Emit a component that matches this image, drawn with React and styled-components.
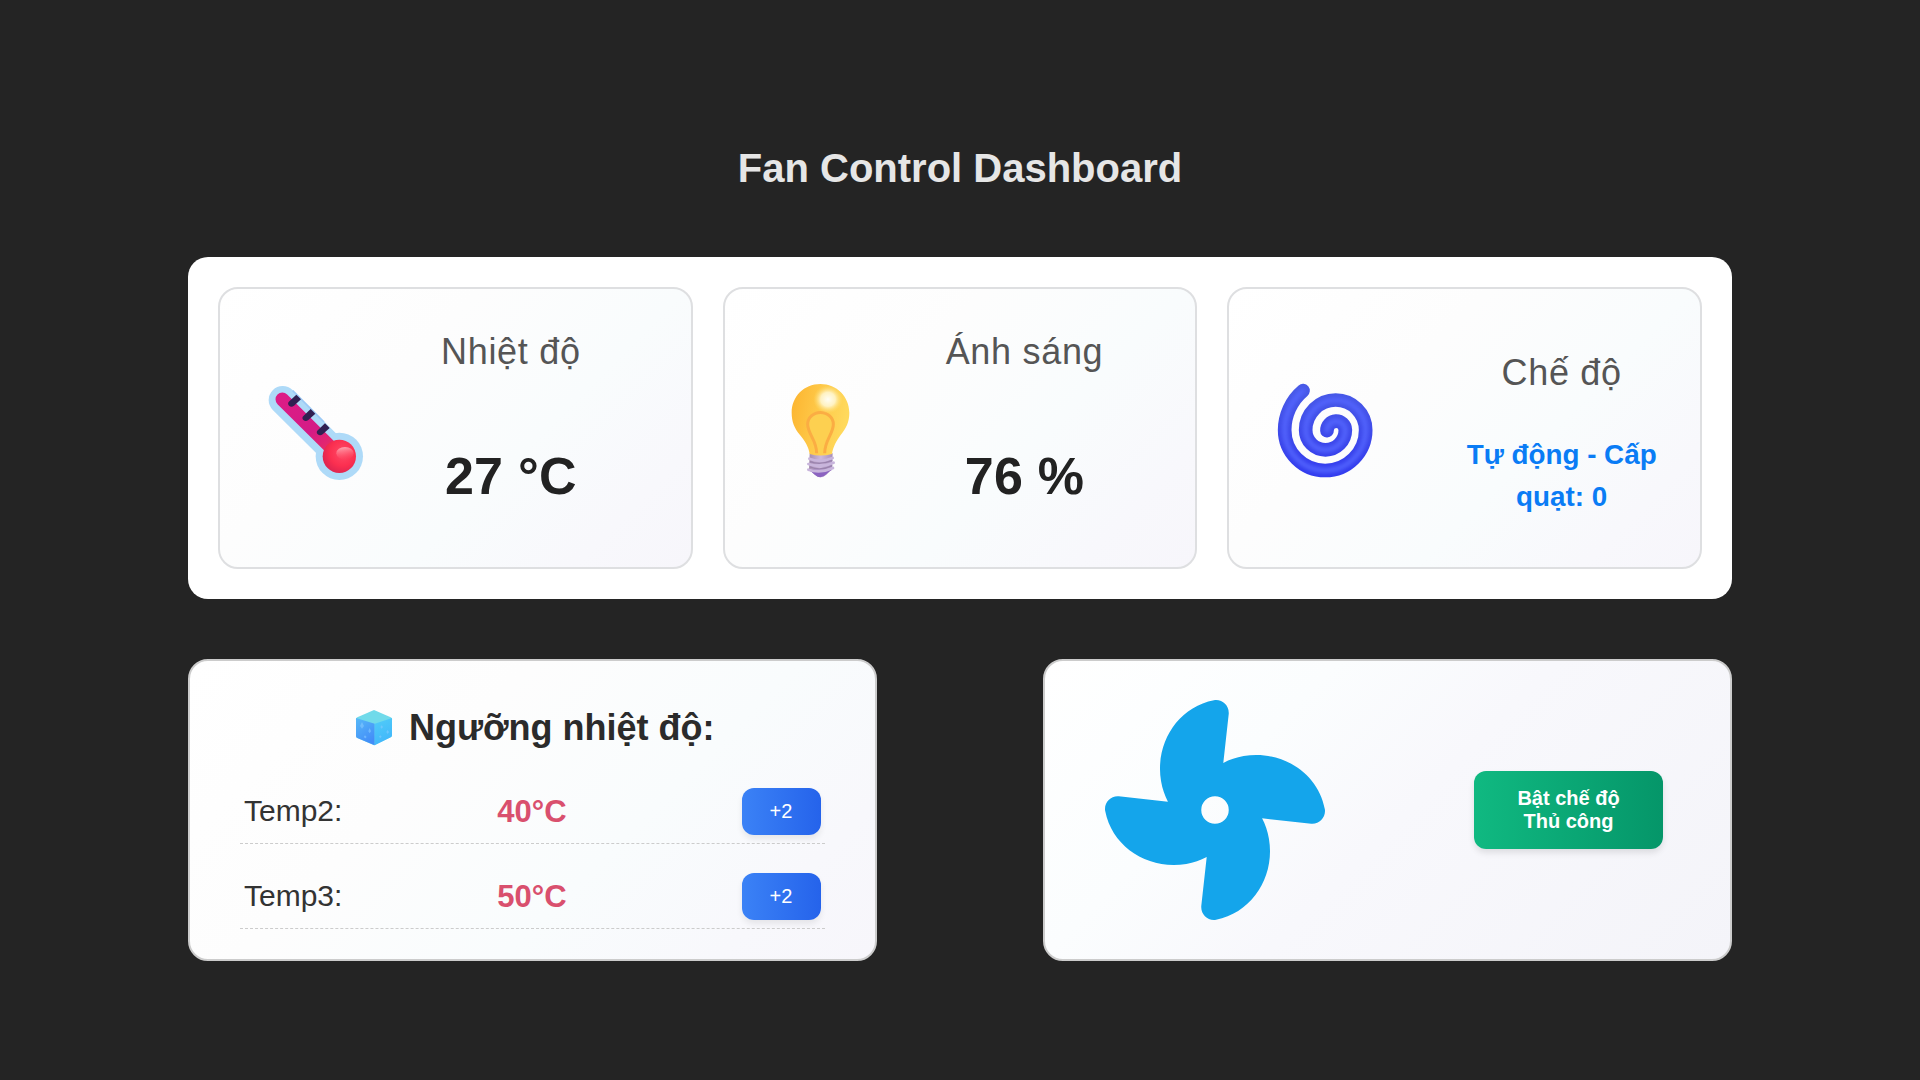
import React from 'react';
import styled, { createGlobalStyle } from 'styled-components';

const GlobalStyle = createGlobalStyle`
  * { box-sizing: border-box; }
  body {
    margin: 0;
    background: #242424;
    font-family: Arial, "Liberation Sans", sans-serif;
  }
`;

const Page = styled.main`
  width: 1544px;
  min-height: 1080px;
  margin: 0 auto;
  padding-top: 138px;
`;

const Title = styled.h1`
  margin: 0 0 59px;
  font-size: 40px;
  line-height: 60px;
  font-weight: 700;
  text-align: center;
  color: #e6e6e6;
`;

const StatsPanel = styled.section`
  display: grid;
  grid-template-columns: repeat(3, 1fr);
  gap: 30px;
  height: 342px;
  padding: 30px;
  border-radius: 20px;
  background: #fff;
`;

const StatCard = styled.article`
  display: flex;
  align-items: center;
  padding-left: 30px;
  border: 2px solid #dedfe1;
  border-radius: 20px;
  background: linear-gradient(135deg, #ffffff 0%, #fdfdfd 35%, #f9fcfd 62%, #f8f8fc 84%, #f7f6fb 100%);
`;

const StatIcon = styled.svg`
  flex: none;
  width: 130px;
  height: 120px;
`;

const StatInfo = styled.div`
  flex: 1;
  align-self: stretch;
  display: flex;
  flex-direction: column;
  align-items: center;
  gap: ${(p) => p.$gap}px;
  padding: ${(p) => p.$pad};
`;

const StatLabel = styled.div`
  font-size: 36px;
  line-height: 54px;
  letter-spacing: 0.7px;
  color: #555;
`;

const StatValue = styled.div`
  font-size: 52px;
  line-height: 78px;
  font-weight: 700;
  letter-spacing: 0.2px;
  color: #222;
`;

const ModeText = styled.div`
  max-width: 220px;
  font-size: 27.8px;
  line-height: 42px;
  font-weight: 700;
  text-align: center;
  color: #0a7cf5;
`;

const BottomRow = styled.div`
  display: flex;
  justify-content: space-between;
  margin-top: 60px;
`;

const BottomCard = styled.section`
  width: 689px;
  height: 302px;
  border: 2px solid #ccc;
  border-radius: 20px;
`;

const ThresholdCard = styled(BottomCard)`
  padding: 39.5px 50px 0 50px;
  background: linear-gradient(135deg, #ffffff 0%, #fdfdfd 35%, #f9fcfd 62%, #f8f8fc 84%, #f7f6fb 100%);
`;

const FanCard = styled(BottomCard)`
  display: flex;
  align-items: center;
  justify-content: space-between;
  padding: 0 67px 0 60px;
  background: linear-gradient(135deg, #ffffff 0%, #fbfdfe 30%, #f8f8fc 52%, #f4f4f9 100%);
`;

const ThresholdTitle = styled.h2`
  display: flex;
  align-items: center;
  justify-content: center;
  gap: 14.5px;
  margin: 0 0 25.5px;
  padding-left: 4px;
  font-size: 36px;
  line-height: 54px;
  font-weight: 700;
  color: #2b2b2b;
`;

const CubeIcon = styled.svg`
  width: 40px;
  height: 40px;
`;

const ThresholdRow = styled.div`
  display: grid;
  grid-template-columns: 1fr auto 1fr;
  align-items: center;
  height: 64px;
  margin-bottom: 21px;
  padding: 0 4px;
  border-bottom: 1px dashed #ccc;
`;

const RowLabel = styled.span`
  font-size: 30px;
  line-height: 34px;
  padding-bottom: 1px;
  color: #333;
`;

const RowValue = styled.span`
  margin-right: 1px;
  font-size: 31px;
  font-weight: 700;
  color: #d9506e;
`;

const StepButton = styled.button`
  justify-self: end;
  width: 79px;
  height: 47px;
  margin-right: 0.5px;
  padding: 0;
  border: 0;
  border-radius: 12px;
  font: 20px Arial, "Liberation Sans", sans-serif;
  color: #fff;
  background: linear-gradient(to right, #3b82f6, #2563eb);
  box-shadow: 0 4px 6px rgba(0, 0, 0, 0.08);
`;

const ModeButton = styled.button`
  width: 189px;
  height: 78px;
  padding: 0 32px;
  border: 0;
  border-radius: 12px;
  font: 700 20px/23px Arial, "Liberation Sans", sans-serif;
  color: #fff;
  background: linear-gradient(to right, #10b981, #059669);
  box-shadow: 0 4px 6px rgba(0, 0, 0, 0.1);
`;

const FanIcon = styled.svg`
  width: 220px;
  height: 220px;
  fill: #14a5eb;
`;

function Thermometer() {
  return (
    <StatIcon viewBox="0 -6 390 360">
      <defs>
        <linearGradient id="tube" x1="0" y1="0" x2="1" y2="1">
          <stop offset="0" stopColor="#dc1c86" />
          <stop offset="0.6" stopColor="#d41b86" />
          <stop offset="1" stopColor="#ea2c62" />
        </linearGradient>
        <radialGradient id="ball" cx="0.6" cy="0.4" r="0.65">
          <stop offset="0" stopColor="#ff4a66" />
          <stop offset="0.6" stopColor="#fb2f50" />
          <stop offset="1" stopColor="#dc2450" />
        </radialGradient>
        <linearGradient id="shine" x1="0" y1="0" x2="0.2" y2="1">
          <stop offset="0" stopColor="#ffb3bd" />
          <stop offset="1" stopColor="#ff4a63" stopOpacity="0.2" />
        </linearGradient>
      </defs>
      <path d="M98 90 268 259" stroke="#aedaf8" strokeWidth="84" strokeLinecap="round" />
      <circle cx="268" cy="259" r="71" fill="#aedaf8" />
      <path d="M128 62 222 156" stroke="#9bc9f6" strokeWidth="5" />
      <path d="M97 88 250 240" stroke="url(#tube)" strokeWidth="41" strokeLinecap="round" />
      <circle cx="268" cy="259" r="50" fill="url(#ball)" />
      <ellipse cx="285" cy="250" rx="26" ry="19" fill="url(#shine)" />
      <g fill="#302052">
        <path id="tick" d="M139 74 153 88 132 107Q124 113 117 107 111 100 118 94Z" />
        <use href="#tick" x="43" y="43" />
        <use href="#tick" x="86" y="86" />
      </g>
    </StatIcon>
  );
}

function Bulb() {
  return (
    <StatIcon viewBox="-46 -6 390 360">
      <defs>
        <linearGradient id="glass" x1="0" y1="0" x2="1" y2="0.25">
          <stop offset="0" stopColor="#fcb32e" />
          <stop offset="0.5" stopColor="#fec848" />
          <stop offset="1" stopColor="#ffd95c" />
        </linearGradient>
        <radialGradient id="glow" cx="0.5" cy="0.5" r="0.5">
          <stop offset="0" stopColor="#fffef6" />
          <stop offset="0.5" stopColor="#fff6cf" stopOpacity="0.9" />
          <stop offset="1" stopColor="#ffe070" stopOpacity="0" />
        </radialGradient>
        <linearGradient id="metal" x1="0" y1="0" x2="1" y2="0">
          <stop offset="0" stopColor="#a58cad" />
          <stop offset="0.5" stopColor="#cdb9dd" />
          <stop offset="1" stopColor="#a88fba" />
        </linearGradient>
      </defs>
      <path d="M118 250H187L185 298 168 314Q151 330 134 314L116 298Z" fill="url(#metal)" />
      <path d="M112 299H186Q176 302 168 313 151 330 133 314 127 306 112 299Z" fill="#8b63c0" />
      <path d="M150 42C199 42 237 80 237 128 237 156 227 175 211 195 198 214 188 230 185 252Q150 261 118 252C115 230 104 214 89 195 72 174 64 155 64 128 64 80 101 42 150 42Z" fill="url(#glass)" />
      <path d="M139 250C139 210 112 192 112 163A38 35 0 0 1 189 163C189 192 163 210 163 250" fill="#fdd050" stroke="#fbad43" strokeWidth="9" />
      <ellipse cx="173" cy="88" rx="44" ry="42" fill="url(#glow)" />
      <path d="M117 266Q150 279 187 264M114 282Q151 295 190 278M114 299Q151 311 188 294" fill="none" stroke="#c8b5dc" strokeWidth="8" strokeLinecap="round" />
      <path d="M119 275Q151 286 186 271M119 291Q151 304 186 287" fill="none" stroke="#9a83ae" strokeWidth="4" />
    </StatIcon>
  );
}

const SPIRAL = 'M130 62C94 92 75 137 75 180A121.5 121.5 0 0 0 318 180A90 90 0 0 0 138 180A59.5 59.5 0 0 0 257 180A27.5 27.5 0 0 0 202 182';

function Spiral() {
  return (
    <StatIcon viewBox="-2 -6 390 360">
      <defs>
        <linearGradient id="cyclone" x1="0" y1="0" x2="0" y2="1">
          <stop offset="0" stopColor="#4759e6" />
          <stop offset="0.7" stopColor="#3a44ea" />
          <stop offset="1" stopColor="#323cee" />
        </linearGradient>
        <filter id="soften" x="-20%" y="-20%" width="140%" height="140%">
          <feGaussianBlur stdDeviation="6" />
        </filter>
      </defs>
      <g fill="none" strokeLinecap="round">
        <path d={SPIRAL} stroke="url(#cyclone)" strokeWidth="41" />
        <path d={SPIRAL} stroke="#5466ff" strokeWidth="14" filter="url(#soften)" />
      </g>
    </StatIcon>
  );
}

function IceCube() {
  return (
    <CubeIcon viewBox="43 52 120 120">
      <defs>
        <linearGradient id="iceLeft" x1="0" y1="0" x2="0.5" y2="1">
          <stop offset="0" stopColor="#57b9f8" />
          <stop offset="1" stopColor="#438df8" />
        </linearGradient>
        <linearGradient id="iceRight" x1="0" y1="0" x2="0.3" y2="1">
          <stop offset="0" stopColor="#51cdf8" />
          <stop offset="1" stopColor="#42b7fb" />
        </linearGradient>
      </defs>
      <path d="M103 58 153 80Q157 82 157 86V134Q157 138 153 140L103 164 53 142Q49 140 49 136V86Q49 82 53 80Z" fill="#70daea" />
      <path d="M49 82 105 99V164L53 142Q49 140 49 136Z" fill="url(#iceLeft)" />
      <path d="M105 99 157 82V134Q157 138 153 140L105 164Z" fill="url(#iceRight)" />
      <g fill="#86caff" opacity="0.6">
        <path d="M67 94l6 12-6 8-6-8zM90 112l4 10-4 6-4-6zM76 134l5 5-4 4-5-4z" />
        <path d="M126 104l4 5-4 5-4-5zM144 118l4 6-4 6-4-6zM122 134l4 4-4 4-4-4z" />
      </g>
    </CubeIcon>
  );
}

function Fan() {
  return (
    <FanIcon viewBox="0 0 512 512">
      <path d="M258.6 0c-1.7 0-3.4 .1-5.1 .5C168 17 115.6 102.3 130.5 189.3c2.9 17 8.4 32.9 15.9 47.4L32 224H29.4C13.2 224 0 237.2 0 253.4c0 1.7 .1 3.4 .5 5.1C17 344 102.3 396.4 189.3 381.5c17-2.9 32.9-8.4 47.4-15.9L224 480v2.6c0 16.2 13.2 29.4 29.4 29.4c1.7 0 3.4-.1 5.1-.5C344 495 396.4 409.7 381.5 322.7c-2.9-17-8.4-32.9-15.9-47.4L480 288h2.6c16.2 0 29.4-13.2 29.4-29.4c0-1.7-.1-3.4-.5-5.1C495 168 409.7 115.6 322.7 130.5c-17 2.9-32.9 8.4-47.4 15.9L288 32V29.4C288 13.2 274.8 0 258.6 0zM256 224a32 32 0 1 1 0 64 32 32 0 1 1 0-64z" />
    </FanIcon>
  );
}

const thresholds = [
  { name: 'Temp2:', value: '40°C' },
  { name: 'Temp3:', value: '50°C' },
];

export default function App() {
  return (
    <>
      <GlobalStyle />
      <Page>
        <Title>Fan Control Dashboard</Title>
        <StatsPanel>
          <StatCard>
            <Thermometer />
            <StatInfo $gap={58} $pad="35.5px 49px 0 0">
              <StatLabel>Nhiệt độ</StatLabel>
              <StatValue>27 °C</StatValue>
            </StatInfo>
          </StatCard>
          <StatCard>
            <Bulb />
            <StatInfo $gap={58} $pad="35.5px 31px 0 0">
              <StatLabel>Ánh sáng</StatLabel>
              <StatValue>76 %</StatValue>
            </StatInfo>
          </StatCard>
          <StatCard>
            <Spiral />
            <StatInfo $gap={34} $pad="56.5px 0 0 34px">
              <StatLabel>Chế độ</StatLabel>
              <ModeText>Tự động - Cấp quạt: 0</ModeText>
            </StatInfo>
          </StatCard>
        </StatsPanel>
        <BottomRow>
          <ThresholdCard>
            <ThresholdTitle>
              <IceCube />
              Ngưỡng nhiệt độ:
            </ThresholdTitle>
            {thresholds.map((t) => (
              <ThresholdRow key={t.name}>
                <RowLabel>{t.name}</RowLabel>
                <RowValue>{t.value}</RowValue>
                <StepButton>+2</StepButton>
              </ThresholdRow>
            ))}
          </ThresholdCard>
          <FanCard>
            <Fan />
            <ModeButton>Bật chế độ Thủ công</ModeButton>
          </FanCard>
        </BottomRow>
      </Page>
    </>
  );
}
